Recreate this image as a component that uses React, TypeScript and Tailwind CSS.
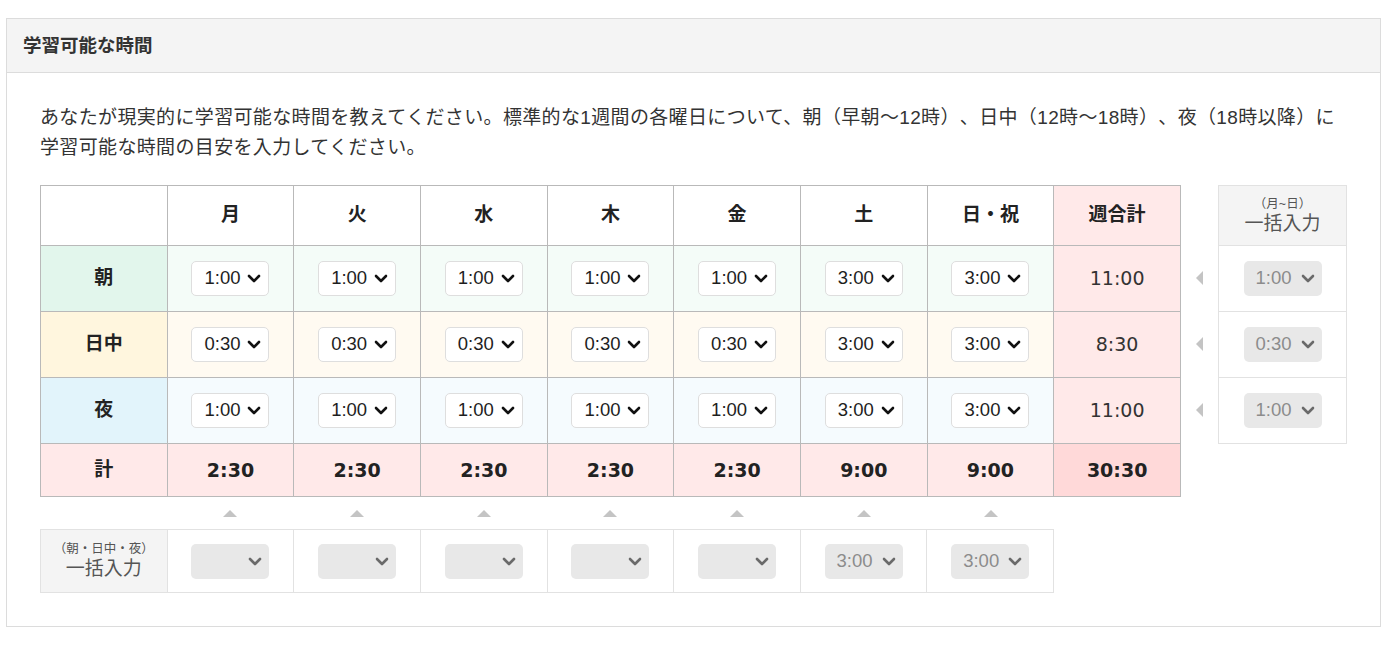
import clsx from "clsx";

const days = ["月", "火", "水", "木", "金", "土", "日・祝"];

const rows = [
  {
    label: "朝",
    labelBg: "bg-[#e2f6ec]",
    cellBg: "bg-[#f4fcf8]",
    values: ["1:00", "1:00", "1:00", "1:00", "1:00", "3:00", "3:00"],
    total: "11:00",
    bulk: "1:00",
  },
  {
    label: "日中",
    labelBg: "bg-[#fff6de]",
    cellBg: "bg-[#fffaf1]",
    values: ["0:30", "0:30", "0:30", "0:30", "0:30", "3:00", "3:00"],
    total: "8:30",
    bulk: "0:30",
  },
  {
    label: "夜",
    labelBg: "bg-[#e2f4fb]",
    cellBg: "bg-[#f5fbfe]",
    values: ["1:00", "1:00", "1:00", "1:00", "1:00", "3:00", "3:00"],
    total: "11:00",
    bulk: "1:00",
  },
];

const dayTotals = ["2:30", "2:30", "2:30", "2:30", "2:30", "9:00", "9:00"];
const dayBulk = ["", "", "", "", "", "3:00", "3:00"];

function TimeSelect({ value, muted }: { value: string; muted?: boolean }) {
  return (
    <div
      className={clsx(
        "mx-auto flex h-[35px] w-[78px] items-center justify-between rounded-[5px] pr-[7px] pl-[12px]",
        muted
          ? "bg-[#e8e8e8] text-[#8c8c8c]"
          : "border border-[#dedede] bg-white text-[#1e1e1e]",
      )}
    >
      <span className="text-[18.5px] leading-none">{value}</span>
      <svg width="14" height="9" viewBox="0 0 14 9">
        <path
          d="M2 2 L7 7 L12 2"
          fill="none"
          stroke={muted ? "#6a6a6a" : "#111"}
          strokeWidth="2.6"
          strokeLinecap="round"
          strokeLinejoin="round"
        />
      </svg>
    </div>
  );
}

function UpArrow() {
  return (
    <svg width="14" height="7" viewBox="0 0 14 7" className="mx-auto">
      <path d="M0 7 L7 0 L14 7 Z" fill="#c4c4c4" />
    </svg>
  );
}

function LeftArrow() {
  return (
    <svg width="7" height="14" viewBox="0 0 7 14">
      <path d="M7 0 L0 7 L7 14 Z" fill="#c4c4c4" />
    </svg>
  );
}

export default function App() {
  const cell = "border border-[#b9b9b9] text-center align-middle";
  const lightCell = "border border-[#e2e2e2] text-center align-middle";

  return (
    <div className="h-[652px] w-[1388px] bg-white pt-[18px] pl-[6px] font-['Liberation_Sans','Noto_Sans_CJK_JP',sans-serif] text-[#333] [text-spacing-trim:space-all]">
      <div className="w-[1375px] border border-[#dcdcdc]">
        <div className="flex h-[54px] items-center border-b border-[#dcdcdc] bg-[#f4f4f4] pl-[16px]">
          <h2 className="text-[18.5px] font-bold text-[#333]">学習可能な時間</h2>
        </div>

        <div className="px-[33px] pt-[30px] pb-[33px]">
          <p className="text-[19px] leading-[30px] tracking-[0.35px] text-[#333]">
            あなたが現実的に学習可能な時間を教えてください。標準的な1週間の各曜日について、朝（早朝～12時）、日中（12時～18時）、夜（18時以降）に
            <br />
            学習可能な時間の目安を入力してください。
          </p>

          <div className="mt-[22px] flex items-start">
            <div className="w-[1141px]">
              <table className="w-[1141px] table-fixed border-collapse">
                <thead>
                  <tr className="h-[60px]">
                    <th className={clsx(cell, "bg-white")} />
                    {days.map((d) => (
                      <th
                        key={d}
                        className={clsx(cell, "bg-white text-[19px] font-bold text-[#222]")}
                      >
                        {d}
                      </th>
                    ))}
                    <th className={clsx(cell, "bg-[#ffe9e9] text-[19px] font-bold text-[#222]")}>
                      週合計
                    </th>
                  </tr>
                </thead>
                <tbody>
                  {rows.map((r) => (
                    <tr key={r.label} className="h-[66px]">
                      <td className={clsx(cell, r.labelBg, "text-[19px] font-bold text-[#222]")}>
                        {r.label}
                      </td>
                      {r.values.map((v, i) => (
                        <td key={i} className={clsx(cell, r.cellBg)}>
                          <TimeSelect value={v} />
                        </td>
                      ))}
                      <td className={clsx(cell, "bg-[#ffe9e9] font-['DejaVu_Sans',sans-serif] text-[19px] text-[#333]")}>
                        {r.total}
                      </td>
                    </tr>
                  ))}
                  <tr className="h-[53px]">
                    <td className={clsx(cell, "bg-[#ffe9e9] text-[19px] font-bold text-[#222]")}>
                      計
                    </td>
                    {dayTotals.map((t, i) => (
                      <td
                        key={i}
                        className={clsx(cell, "bg-[#ffe9e9] font-['DejaVu_Sans',sans-serif] text-[19px] font-bold text-[#222]")}
                      >
                        {t}
                      </td>
                    ))}
                    <td className={clsx(cell, "bg-[#ffd9d9] font-['DejaVu_Sans',sans-serif] text-[19px] font-bold text-[#222]")}>
                      30:30
                    </td>
                  </tr>
                </tbody>
              </table>

              <div className="grid h-[33px] w-[1141px] grid-cols-9 items-center">
                <div />
                {days.map((d) => (
                  <div key={d} className="flex justify-center">
                    <UpArrow />
                  </div>
                ))}
              </div>

              <table className="-mt-px w-[1014px] table-fixed border-collapse">
                <tbody>
                  <tr className="h-[63px]">
                    <td className={clsx(lightCell, "bg-[#f4f4f4] text-[#555]")}>
                      <div className="text-[12.5px] leading-[16px]">（朝・日中・夜）</div>
                      <div className="text-[19px] leading-[24px]">一括入力</div>
                    </td>
                    {dayBulk.map((v, i) => (
                      <td key={i} className={clsx(lightCell, "bg-white")}>
                        <TimeSelect value={v} muted />
                      </td>
                    ))}
                  </tr>
                </tbody>
              </table>
            </div>

            <div className="flex w-[37px] flex-col pt-[60px]">
              {rows.map((r) => (
                <div key={r.label} className="flex h-[66px] items-center justify-center">
                  <LeftArrow />
                </div>
              ))}
            </div>

            <table className="w-[129px] table-fixed border-collapse">
              <thead>
                <tr className="h-[60px]">
                  <th className={clsx(lightCell, "bg-[#f4f4f4] font-normal text-[#555]")}>
                    <div className="text-[12.5px] leading-[16px]">（月~日）</div>
                    <div className="text-[19px] leading-[24px]">一括入力</div>
                  </th>
                </tr>
              </thead>
              <tbody>
                {rows.map((r) => (
                  <tr key={r.label} className="h-[66px]">
                    <td className={clsx(lightCell, "bg-white")}>
                      <TimeSelect value={r.bulk} muted />
                    </td>
                  </tr>
                ))}
              </tbody>
            </table>
          </div>
        </div>
      </div>
    </div>
  );
}
